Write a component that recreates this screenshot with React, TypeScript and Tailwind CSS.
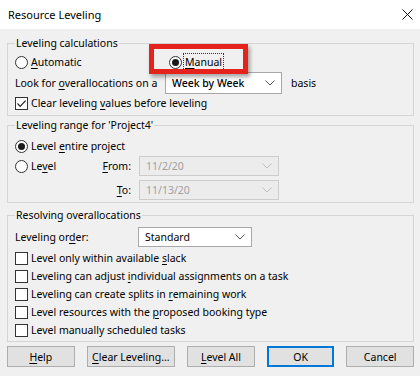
import React from "react";

const U = ({ children }: { children: React.ReactNode }) => (
  <span className="underline underline-offset-[2px] decoration-[1px]">{children}</span>
);

function Radio({ checked }: { checked?: boolean }) {
  return (
    <span className="w-[13px] h-[13px] rounded-full border border-[#333333] bg-white flex items-center justify-center shrink-0">
      {checked && <span className="w-[7px] h-[7px] rounded-full bg-[#1a1a1a]" />}
    </span>
  );
}

function Check({ checked }: { checked?: boolean }) {
  return (
    <span className="w-[13px] h-[13px] border border-[#333333] bg-white flex items-center justify-center shrink-0">
      {checked && (
        <svg width="11" height="11" viewBox="0 0 11 11">
          <path d="M1.5 5.5 L4.2 8.3 L9.6 2.6" stroke="#222" strokeWidth="1.2" fill="none" />
        </svg>
      )}
    </span>
  );
}

function Chevron({ color }: { color: string }) {
  return (
    <svg width="10" height="6" viewBox="0 0 10 6" className="shrink-0">
      <path d="M0.5 0.5 L5 5 L9.5 0.5" stroke={color} fill="none" strokeWidth="1" />
    </svg>
  );
}

function Group({ title, children, className }: { title: string; children: React.ReactNode; className?: string }) {
  return (
    <fieldset className={"border border-[#d5d5d5] px-[7px] min-w-0 " + (className ?? "")}>
      <legend className="ml-[0px] px-[1px] leading-[16px]">{title}</legend>
      {children}
    </fieldset>
  );
}

function Btn({ children, w, primary }: { children: React.ReactNode; w: string; primary?: boolean }) {
  return (
    <div
      className={
        "h-[21px] flex items-center justify-center whitespace-nowrap bg-[#e1e1e1] " +
        w +
        (primary ? " border-2 border-[#0078d7]" : " border border-[#adadad]")
      }
    >
      {children}
    </div>
  );
}

export default function App() {
  const checks: React.ReactNode[] = [
    <>Level only within available <U>s</U>lack</>,
    <>Leveling can adjust <U>i</U>ndividual assignments on a task</>,
    <>Leveling can create splits in <U>r</U>emaining work</>,
    <>Level resources with the <U>p</U>roposed booking type</>,
    <>Level manually scheduled tasks</>,
  ];
  return (
    <div className="relative w-[420px] h-[376px] overflow-hidden whitespace-nowrap bg-[#f0f0f0] text-[10.5px] leading-[16px] text-black font-['Noto_Sans',sans-serif]">
      {/* Title bar */}
      <div className="h-[29px] bg-white flex items-center justify-between pl-[8px] pr-[7px]">
        <span className="text-[11px]">Resource Leveling</span>
        <svg width="11" height="11" viewBox="0 0 11 11">
          <path d="M0.5 0.5 L10.5 10.5 M10.5 0.5 L0.5 10.5" stroke="#111" strokeWidth="1" />
        </svg>
      </div>

      <div className="pt-[6px] pl-[7px] pr-[6px]">
        {/* Group 1 */}
        <Group title="Leveling calculations" className="pb-[4px]">
          <div className="flex items-center h-[16px] mt-[3px]">
            <div className="w-[154px] flex items-center gap-[3px]">
              <Radio />
              <span>
                <U>A</U>utomatic
              </span>
            </div>
            <div className="flex items-center gap-[2px]">
              <Radio checked />
              <span className="outline outline-1 outline-dotted outline-[#333] px-[1px]">
                <U>M</U>anual
              </span>
            </div>
          </div>
          <div className="flex items-center h-[22px] mt-[2px]">
            <div className="w-[150px]">
              Look for <U>o</U>verallocations on a
            </div>
            <div className="w-[117px] h-[22px] border border-[#a8a8a8] bg-white flex items-center pl-[6px] pr-[6px]">
              <span className="flex-1 font-medium">Week by Week</span>
              <Chevron color="#555" />
            </div>
            <span className="ml-[9px]">basis</span>
          </div>
          <div className="flex items-center h-[16px] mt-[1px] gap-[3px]">
            <Check checked />
            <span>
              Clear leveling <U>v</U>alues before leveling
            </span>
          </div>
        </Group>

        {/* Group 2 */}
        <Group title="Leveling range for 'Project4'" className="mt-[1px] pb-[2px]">
          <div className="flex items-center h-[16px] mt-[5px] gap-[3px]">
            <Radio checked />
            <span>
              Level <U>e</U>ntire project
            </span>
          </div>
          <div className="flex items-center h-[20px] mt-[2px]">
            <div className="w-[116px] flex items-center justify-between">
              <div className="flex items-center gap-[3px]">
                <Radio />
                <span>
                  Le<U>v</U>el
                </span>
              </div>
              <span>
                <U>F</U>rom:
              </span>
            </div>
            <div className="ml-[8px] w-[140px] h-[20px] border border-[#cccccc] bg-[#ececec] flex items-center pl-[6px] pr-[6px] text-[#a0a0a0]">
              <span className="flex-1">11/2/20</span>
              <Chevron color="#bdbdbd" />
            </div>
          </div>
          <div className="flex items-center h-[20px] mt-[4px]">
            <div className="w-[116px] text-right">
              <U>T</U>o:
            </div>
            <div className="ml-[8px] w-[140px] h-[20px] border border-[#cccccc] bg-[#ececec] flex items-center pl-[6px] pr-[6px] text-[#a0a0a0]">
              <span className="flex-1">11/13/20</span>
              <Chevron color="#bdbdbd" />
            </div>
          </div>
        </Group>

        {/* Group 3 */}
        <Group title="Resolving overallocations" className="mt-[4px] pb-[2px]">
          <div className="flex items-center h-[20px] mt-[4px]">
            <div className="w-[123px]">
              Leveling or<U>d</U>er:
            </div>
            <div className="w-[114px] h-[20px] border border-[#a8a8a8] bg-white flex items-center pl-[6px] pr-[6px]">
              <span className="flex-1">Standard</span>
              <Chevron color="#555" />
            </div>
          </div>
          <div className="mt-[2px] flex flex-col">
            {checks.map((c, i) => (
              <div key={i} className="flex items-center h-[18px] gap-[3px]">
                <Check />
                <span>{c}</span>
              </div>
            ))}
          </div>
        </Group>

        {/* Buttons */}
        <div className="flex gap-[12px] mt-[4px]">
          <Btn w="w-[68px]">
            <U>H</U>elp
          </Btn>
          <Btn w="w-[89px]">
            <U>C</U>lear Leveling...
          </Btn>
          <Btn w="w-[68px]">
            <U>L</U>evel All
          </Btn>
          <Btn w="w-[68px]" primary>
            OK
          </Btn>
          <Btn w="w-[68px]">Cancel</Btn>
        </div>
      </div>

      {/* Red highlight box */}
      <div className="absolute left-[149px] top-[44px] w-[99px] h-[30px] border-[5px] border-[#e5231d] shadow-[2px_3px_4px_rgba(0,0,0,0.35)]" />
    </div>
  );
}
